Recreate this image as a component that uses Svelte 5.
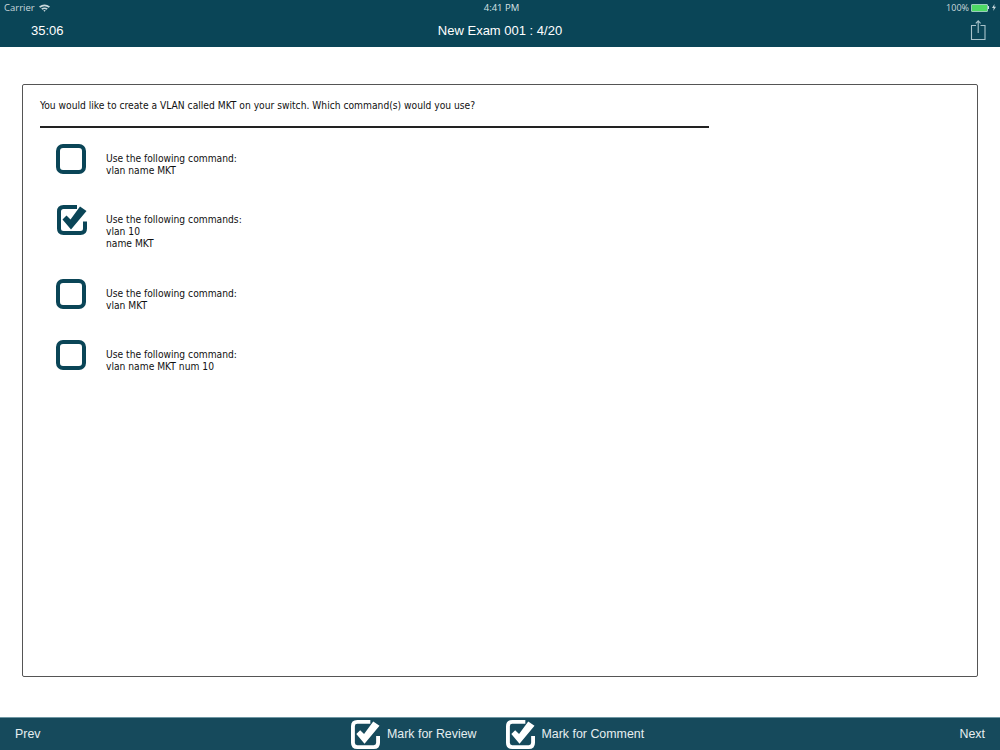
<script>
  const options = [
    { lines: ['Use the following command:', 'vlan name MKT'], checked: false },
    { lines: ['Use the following commands:', 'vlan 10', 'name MKT'], checked: true },
    { lines: ['Use the following command:', 'vlan MKT'], checked: false },
    { lines: ['Use the following command:', 'vlan name MKT num 10'], checked: false }
  ];
</script>

{#snippet box(checked, cls)}
  <svg class={cls} viewBox="0 0 30 30" aria-hidden="true">
    {#if checked}
      <path d="M20 2H6.500Q2 2 2 6.500V23.500Q2 28 6.500 28H23.500Q28 28 28 23.500V16.500" fill="none" stroke="currentColor" stroke-width="4"/>
      <path d="M5.500 14.500L9.500 10.500L13.500 14.500L23 1.500L29.500 6L14 24.500Z" fill="currentColor"/>
    {:else}
      <rect x="2" y="2" width="26" height="26" rx="5" fill="none" stroke="currentColor" stroke-width="4"/>
    {/if}
  </svg>
{/snippet}

<div class="page">
  <header>
    <div class="status">
      <span class="carrier">Carrier
        <svg width="11" height="8" viewBox="0 0 11 8" aria-hidden="true"><path d="M0 2.500Q5.500-1.500 11 2.500L9.800 3.700Q5.500 .6 1.200 3.700ZM2.200 4.600Q5.500 2.200 8.800 4.600L7.600 5.700Q5.500 4.300 3.400 5.700ZM4.300 6.500Q5.500 5.700 6.700 6.500L5.500 7.800Z" fill="currentColor"/></svg>
      </span>
      <span class="clock">4:41 PM</span>
      <span class="battery">100%
        <span class="cell"></span><span class="nub"></span>
        <svg width="4" height="7" viewBox="0 0 4 7" aria-hidden="true"><path d="M2.500 0L0 4H1.700L1.200 7L4 2.800H2.200Z" fill="currentColor"/></svg>
      </span>
    </div>
    <div class="nav">
      <span class="timer">35:06</span>
      <span class="title">New Exam 001 : 4/20</span>
      <svg class="share" width="16" height="21" viewBox="0 0 16 21" aria-hidden="true">
        <path d="M6 5.500H1.500V19.500H15V5.500H10.500M8.200 13V1M5.800 3.300L8.200 .9L10.600 3.300" fill="none" stroke="currentColor" stroke-width="1.100"/>
      </svg>
    </div>
  </header>

  <main>
    <section class="card">
      <p class="question">You would like to create a VLAN called MKT on your switch. Which command(s) would you use?</p>
      <hr />
      <ul>
        {#each options as o}
          <li class:three={o.lines.length === 3}>
            {@render box(o.checked, o.checked ? 'check on' : 'check')}
            <div class="text">
              {#each o.lines as l}<div>{l}</div>{/each}
            </div>
          </li>
        {/each}
      </ul>
    </section>
  </main>

  <footer>
    <span>Prev</span>
    <div class="marks">
      <span class="mark">{@render box(true, 'mini')}Mark for Review</span>
      <span class="mark">{@render box(true, 'mini')}Mark for Comment</span>
    </div>
    <span>Next</span>
  </footer>
</div>

<style>
  :global(body) { margin: 0; background: #fff; }
  .page {
    width: 1000px; height: 750px; display: flex; flex-direction: column;
    font-family: "Liberation Sans", sans-serif; overflow: hidden;
  }
  header { height: 47px; background: #0a4557; color: #fff; flex: none; }
  .status {
    height: 15px; display: grid; grid-template-columns: 1fr auto 1fr; align-items: center;
    padding: 0 4px; font: 9.500px "Open Sans", sans-serif; color: #c9d8dc;
  }
  .carrier { display: flex; align-items: center; gap: 4px; }
  .clock { color: #d8e3e6; margin-left: 3px; }
  .battery { display: flex; align-items: center; justify-content: flex-end; font-size: 9px; }
  .cell { width: 15px; height: 6px; margin-left: 2px; background: #4cd964; border: 1px solid #9cb; border-radius: 1px; }
  .nub { width: 1px; height: 3px; background: #cde; margin-right: 3px; }
  .nav { height: 32px; position: relative; display: flex; align-items: center; justify-content: center; }
  .timer { position: absolute; left: 31px; top: 8px; font-size: 13px; color: #fff; }
  .title { font-size: 13px; margin-top: -1px; }
  .share { position: absolute; right: 14px; top: 5px; color: #a9c3cb; }
  main { flex: 1; padding: 37px 22px 40px; min-height: 0; }
  .card {
    height: 100%; box-sizing: border-box; border: 1px solid #555; border-radius: 2px;
    padding: 15px 17px; background: #fff; color: #111;
    font: 10.200px/12px "DejaVu Sans Condensed", "DejaVu Sans", sans-serif;
    font-stretch: condensed;
  }
  .question { margin: 0; height: 12px; }
  hr { width: 669px; margin: 14px 0 0; border: 0; border-top: 2px solid #222; }
  ul { list-style: none; margin: 17px 0 0; padding: 0 0 0 16px; }
  li { display: flex; height: 61px; }
  li.three { height: 74px; }
  .check { color: #0a4557; flex: none; width: 30px; height: 30px; margin-top: -1px; }
  .check.on { margin-left: 1px; margin-right: -1px; }
  .text { margin-left: 20px; padding-top: 8px; }
  footer {
    height: 33px; flex: none; background: #164a5c; border-top: 1px solid #6f97a3; box-sizing: border-box;
    color: #e6eef0; font-size: 12.400px; display: flex; align-items: center; justify-content: space-between;
    padding: 0 15px 1px; position: relative;
  }
  .marks { position: absolute; left: 351px; top: 0; height: 100%; display: flex; gap: 29px; }
  .mark { display: flex; align-items: center; gap: 7px; padding-bottom: 1px; }
  .mini { color: #fff; flex: none; width: 29px; height: 29px; margin-top: 1px; }
</style>
